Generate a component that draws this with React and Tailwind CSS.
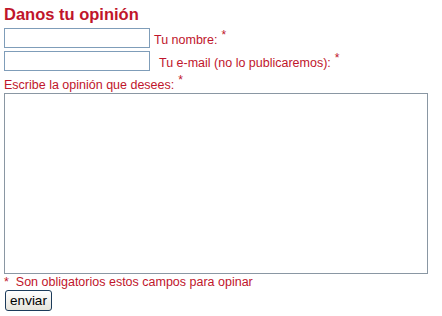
import React from 'react';

const red = 'text-[#c0152b]';

const Star = () => <sup className="ml-[4px] text-[12px] relative top-[-5px]">*</sup>;

export default function App() {
  return (
    <div className={`w-[442px] h-[316px] bg-white ${red} font-['Liberation_Sans',Arial,sans-serif] text-[12.5px] leading-[14px]`}>
      <div className="pl-[4px] pt-[4px]">
        <h2 className="text-[16.5px] leading-[20px] font-bold">Danos tu opinión</h2>
        <div className="flex items-end mt-[4px]">
          <input type="text" className="w-[146px] h-[20px] border border-[#7f9db9] bg-white outline-none" />
          <span className="ml-[4px] mb-[1px]">Tu nombre:<Star /></span>
        </div>
        <div className="flex items-end mt-[3px]">
          <input type="text" className="w-[146px] h-[20px] border border-[#7f9db9] bg-white outline-none" />
          <span className="ml-[9px] mb-[1px]">Tu e-mail (no lo publicaremos):<Star /></span>
        </div>
        <div className="mt-[7px] leading-[14px]">Escribe la opinión que desees:<Star /></div>
        <textarea className="block w-[424px] h-[181px] mt-[1px] border border-[#8a97a3] bg-white outline-none resize-none" />
        <div className="mt-[1px]">*&nbsp; Son obligatorios estos campos para opinar</div>
        <button className="mt-[1px] ml-[1px] w-[47px] h-[21px] rounded-[3px] border border-[#1c3b5a] bg-gradient-to-b from-white to-[#e6e4dc] text-black text-[13.5px] leading-[15px] font-['Liberation_Sans',Arial,sans-serif]">
          enviar
        </button>
      </div>
    </div>
  );
}
